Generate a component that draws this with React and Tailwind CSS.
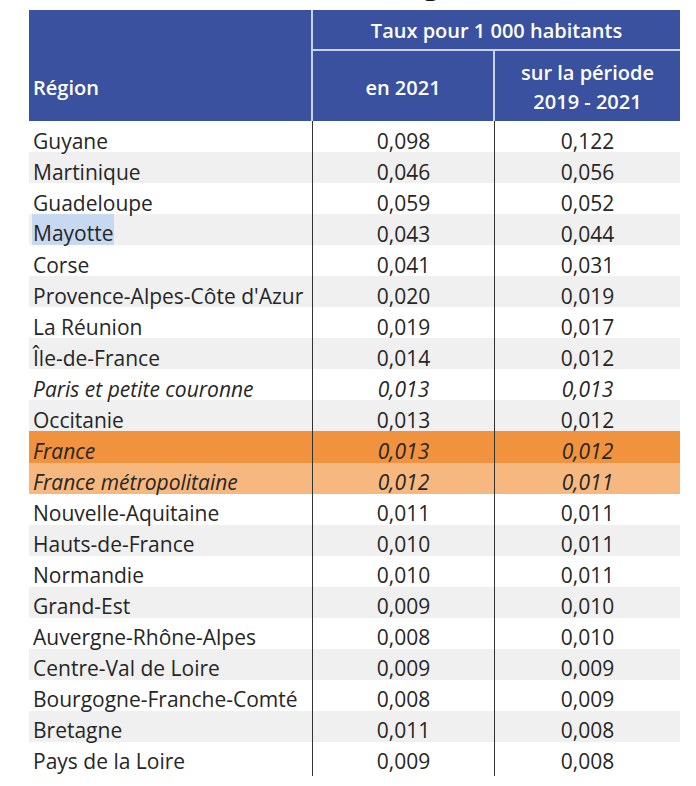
import React from "react";

const rows = [
    { name: "Guyane", a: "0,098", b: "0,122" },
    { name: "Martinique", a: "0,046", b: "0,056" },
    { name: "Guadeloupe", a: "0,059", b: "0,052" },
    { name: "Mayotte", a: "0,043", b: "0,044", selected: true },
    { name: "Corse", a: "0,041", b: "0,031" },
    { name: "Provence-Alpes-Côte d'Azur", a: "0,020", b: "0,019" },
    { name: "La Réunion", a: "0,019", b: "0,017" },
    { name: "Île-de-France", a: "0,014", b: "0,012" },
    { name: "Paris et petite couronne", a: "0,013", b: "0,013", italic: true },
    { name: "Occitanie", a: "0,013", b: "0,012" },
    { name: "France", a: "0,013", b: "0,012", italic: true, tone: "dark" },
    { name: "France métropolitaine", a: "0,012", b: "0,011", italic: true, tone: "light" },
    { name: "Nouvelle-Aquitaine", a: "0,011", b: "0,011" },
    { name: "Hauts-de-France", a: "0,010", b: "0,011" },
    { name: "Normandie", a: "0,010", b: "0,011" },
    { name: "Grand-Est", a: "0,009", b: "0,010" },
    { name: "Auvergne-Rhône-Alpes", a: "0,008", b: "0,010" },
    { name: "Centre-Val de Loire", a: "0,009", b: "0,009" },
    { name: "Bourgogne-Franche-Comté", a: "0,008", b: "0,009" },
    { name: "Bretagne", a: "0,011", b: "0,008" },
    { name: "Pays de la Loire", a: "0,009", b: "0,008" },
]

function rowBg(row, i) {
    if (row.tone === "dark") return "bg-[#f1923f]"
    if (row.tone === "light") return "bg-[#f6b87f]"
    return i % 2 === 1 ? "bg-[#f0f0f0]" : "bg-white"
}

export default function App() {
    return (
        <div className="w-[696px] h-[786px] bg-white overflow-hidden" style={{ fontFamily: "'Open Sans', 'Noto Sans', sans-serif" }}>
            {/* title, cut at the top of the capture */}
            <div className="h-[10px] overflow-hidden">
                <div className="-mt-[35px] pl-[150px] text-[30px] font-bold leading-[36px] text-[#111]">
                    Classement des régions
                </div>
            </div>

            <div className="ml-[29px] w-[651px]">
                {/* header */}
                <div className="grid grid-cols-[282px_180px_185px] grid-rows-[39px_70px] gap-[2px] bg-[#c9d3ee] text-white font-semibold text-[20px] leading-[29px]">
                    <div className="row-span-2 bg-[#3a51a0] flex flex-col justify-end">
                        <div className="h-[70px] flex items-center pl-[4px] pt-[2px]">Région</div>
                    </div>
                    <div className="col-span-2 bg-[#3a51a0] flex items-center justify-center pt-[2px]">
                        Taux pour 1 000 habitants
                    </div>
                    <div className="bg-[#3a51a0] flex items-center justify-center pt-[2px]">en 2021</div>
                    <div className="bg-[#3a51a0] flex flex-col items-center justify-center pt-[2px]">
                        <span>sur la période</span>
                        <span>2019 - 2021</span>
                    </div>
                </div>

                {/* body */}
                <div className="text-[21px] text-[#262626] leading-[22px]">
                    {rows.map((row, i) => (
                        <div
                            key={row.name}
                            className={`grid grid-cols-[283px_182px_186px] h-[31.05px] ${rowBg(row, i)} ${row.italic ? "italic" : ""}`}
                        >
                            <div className="flex items-center pl-[3px]">
                                {row.selected ? (
                                    <span className="bg-[#c6d9f1] h-full flex items-center px-[1px] pt-[6px]">{row.name}</span>
                                ) : (
                                    <span className="px-[1px] pt-[8px]">{row.name}</span>
                                )}
                            </div>
                            <div className="flex items-center justify-center border-l-[1.5px] border-[#333] pt-[8px]">{row.a}</div>
                            <div className="flex items-center justify-center border-l-[1.5px] border-[#333] pt-[8px]">{row.b}</div>
                        </div>
                    ))}
                </div>
                <div className="grid grid-cols-[283px_182px_186px] h-[3px]">
                    <div></div>
                    <div className="border-l-[1.5px] border-[#333]"></div>
                    <div className="border-l-[1.5px] border-[#333]"></div>
                </div>
            </div>
        </div>
    )
}
